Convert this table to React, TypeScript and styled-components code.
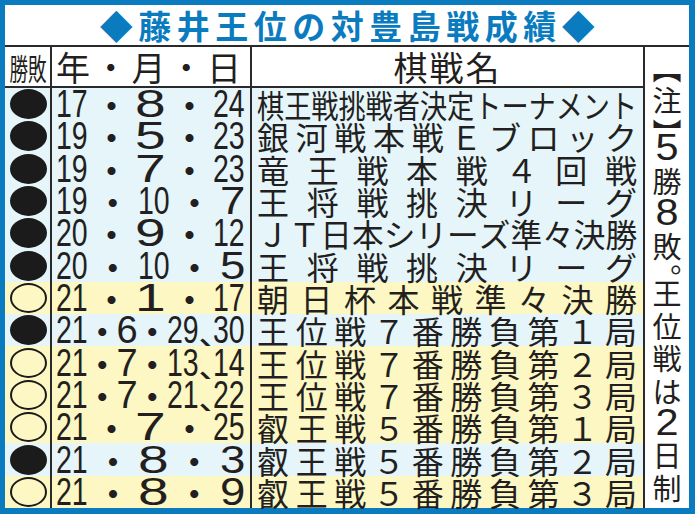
import React from 'react';
import styled, { createGlobalStyle } from 'styled-components';

const BLUE = '#0b7bc0';
const LINE = '#2a2a2a';
const INK = '#231f20';
const TONE = { win: '#fcf7c3', loss: '#e5f5fa' };

type Result = {
  win: boolean;
  y: string;
  m: string;
  d: string[];
  name: string;
};

const results: Result[] = [
  { win: false, y: '17', m: '8', d: ['24'], name: '棋王戦挑戦者決定トーナメント' },
  { win: false, y: '19', m: '5', d: ['23'], name: '銀河戦本戦Ｅブロック' },
  { win: false, y: '19', m: '7', d: ['23'], name: '竜王戦本戦４回戦' },
  { win: false, y: '19', m: '10', d: ['7'], name: '王将戦挑決リーグ' },
  { win: false, y: '20', m: '9', d: ['12'], name: 'ＪＴ日本シリーズ準々決勝' },
  { win: false, y: '20', m: '10', d: ['5'], name: '王将戦挑決リーグ' },
  { win: true, y: '21', m: '1', d: ['17'], name: '朝日杯本戦準々決勝' },
  { win: false, y: '21', m: '6', d: ['29', '30'], name: '王位戦７番勝負第１局' },
  { win: true, y: '21', m: '7', d: ['13', '14'], name: '王位戦７番勝負第２局' },
  { win: true, y: '21', m: '7', d: ['21', '22'], name: '王位戦７番勝負第３局' },
  { win: true, y: '21', m: '7', d: ['25'], name: '叡王戦５番勝負第１局' },
  { win: false, y: '21', m: '8', d: ['3'], name: '叡王戦５番勝負第２局' },
  { win: true, y: '21', m: '8', d: ['9'], name: '叡王戦５番勝負第３局' },
];

// vertical note, one glyph per slot; kind sets how much height the slot takes
type NoteKind = 'full' | 'open' | 'close' | 'stop' | 'digit';
const note: [string, NoteKind][] = [
  ['︻', 'open'],
  ['注', 'full'],
  ['︼', 'close'],
  ['5', 'digit'],
  ['勝', 'full'],
  ['8', 'digit'],
  ['敗', 'full'],
  ['︒', 'stop'],
  ['王', 'full'],
  ['位', 'full'],
  ['戦', 'full'],
  ['は', 'full'],
  ['2', 'digit'],
  ['日', 'full'],
  ['制', 'full'],
];

const NAME_SIZE = 32;
const NAME_SPACE = 380;

const GlobalStyle = createGlobalStyle`
  html, body {
    margin: 0;
    padding: 0;
    background: #fff;
  }
  body {
    font-family: 'Noto Sans CJK JP', 'Noto Sans', sans-serif;
    color: ${INK};
  }
`;

const Frame = styled.div`
  width: 695px;
  height: 514px;
  box-sizing: border-box;
  padding: 5px 6px 6px 5px;
  background: ${BLUE};
`;

const Sheet = styled.div`
  height: 100%;
  background: #fff;
  display: flex;
  flex-direction: column;
`;

const Title = styled.h1`
  margin: 0;
  height: 42px;
  flex: none;
  box-sizing: border-box;
  border-bottom: 2px solid ${LINE};
  display: flex;
  align-items: center;
  justify-content: center;
  padding-left: 6px;
  color: ${BLUE};
  font-family: 'Noto Sans CJK JP', sans-serif;
  font-size: 33px;
  font-weight: 700;
  letter-spacing: 5.5px;
  line-height: 1;
`;

const Body = styled.div`
  flex: 1;
  min-height: 0;
  display: flex;
`;

const Table = styled.div`
  flex: 1;
  display: grid;
  grid-template-columns: 47px 200px 1fr;
  grid-template-rows: 41px repeat(13, 1fr);
`;

const Cell = styled.div<{ $tone?: 'win' | 'loss'; $rule?: boolean; $head?: boolean }>`
  box-sizing: border-box;
  min-width: 0;
  min-height: 0;
  display: flex;
  align-items: center;
  background: ${(p) => (p.$tone ? TONE[p.$tone] : '#fff')};
  border-right: ${(p) => (p.$rule ? `2px solid ${LINE}` : 'none')};
  border-bottom: ${(p) => (p.$head ? `2px solid ${LINE}` : 'none')};
`;

const MarkCell = styled(Cell)`
  justify-content: center;
  padding-left: 1px;
`;

const Mark = styled.span<{ $win: boolean }>`
  width: 37px;
  height: 30px;
  box-sizing: border-box;
  border-radius: 50%;
  border: 2px solid #1b1b1b;
  background: ${(p) => (p.$win ? 'transparent' : '#1b1b1b')};
`;

const HeadMark = styled.span`
  flex: none;
  display: inline-block;
  white-space: nowrap;
  font-size: 30px;
  line-height: 1;
  transform: scaleX(0.62);
`;

const HeadDate = styled(Cell)`
  justify-content: space-between;
  padding: 0 9px 0 4px;
  font-size: 34px;
  line-height: 1;
`;

const HeadDot = styled.span`
  width: 22px;
  display: flex;
  justify-content: center;
`;

const HeadName = styled(Cell)`
  justify-content: center;
  font-size: 34px;
  letter-spacing: 2px;
  line-height: 1;
`;

const DateCell = styled(Cell)`
  justify-content: space-between;
  padding: 0 5px 0 4px;
  font-family: 'Liberation Sans', Arial, sans-serif;
  font-size: 38px;
  line-height: 1;
`;

const Num = styled.span<{ $n: number; $sx: number }>`
  flex: none;
  display: inline-block;
  white-space: nowrap;
  width: ${(p) => p.$n * 0.556 * p.$sx}em;
  transform: scaleX(${(p) => p.$sx});
  transform-origin: left center;
`;

const Dot = styled.span`
  flex: none;
  width: 14px;
  display: flex;
  justify-content: center;
  font-family: 'Noto Sans CJK JP', sans-serif;
`;

const DayGroup = styled.span`
  display: flex;
  align-items: center;
`;

const Comma = styled.span`
  flex: none;
  width: 15px;
  white-space: nowrap;
  font-family: 'Noto Sans CJK JP', sans-serif;
`;

const NameCell = styled(Cell)`
  padding: 0 6px 0 5px;
  font-size: ${NAME_SIZE}px;
  line-height: 1;
`;

const NameLine = styled.span<{ $sx: number }>`
  flex: none;
  display: flex;
  justify-content: space-between;
  width: ${(p) => NAME_SPACE / p.$sx}px;
  transform: scaleX(${(p) => p.$sx});
  transform-origin: left center;
`;

const Note = styled.aside`
  width: 46px;
  flex: none;
  box-sizing: border-box;
  border-left: 2px solid ${LINE};
  padding: 15px 0 6px;
  display: flex;
  flex-direction: column;
  align-items: center;
  justify-content: space-between;
`;

const slotHeight: Record<NoteKind, number> = {
  full: 29,
  digit: 29,
  open: 20,
  close: 12,
  stop: 12,
};

const NoteGlyph = styled.span<{ $kind: NoteKind }>`
  flex: none;
  display: flex;
  justify-content: center;
  align-items: ${(p) => (p.$kind === 'open' ? 'flex-end' : p.$kind === 'full' || p.$kind === 'digit' ? 'center' : 'flex-start')};
  width: 40px;
  height: ${(p) => slotHeight[p.$kind]}px;
  overflow: visible;
  font-family: ${(p) => (p.$kind === 'digit' ? "'Liberation Sans', Arial, sans-serif" : "'Noto Sans CJK JP', sans-serif")};
  font-size: ${(p) => (p.$kind === 'digit' ? 36 : 29)}px;
  line-height: ${(p) => (p.$kind === 'digit' ? 36 : 29)}px;
  & > span {
    display: block;
    flex: none;
    height: ${(p) => (p.$kind === 'digit' ? 36 : 29)}px;
    transform: ${(p) => (p.$kind === 'digit' ? 'scaleX(1.15)' : 'none')};
  }
`;

function Digits({ value, role }: { value: string; role: 'year' | 'month' | 'day' }) {
  let sx = 0.75;
  if (value.length === 1) sx = role === 'month' ? 1.45 : 1.2;
  return (
    <Num $n={value.length} $sx={sx}>
      {value}
    </Num>
  );
}

function DateText({ y, m, d }: Pick<Result, 'y' | 'm' | 'd'>) {
  const tight = d.length > 1;
  return (
    <>
      <Digits value={y} role="year" />
      <Dot>・</Dot>
      {tight ? (
        <Num $n={1} $sx={1}>
          {m}
        </Num>
      ) : (
        <Digits value={m} role="month" />
      )}
      <Dot>・</Dot>
      {tight ? (
        <DayGroup>
          <Num $n={2} $sx={0.75}>
            {d[0]}
          </Num>
          <Comma>、</Comma>
          <Num $n={2} $sx={0.75}>
            {d[1]}
          </Num>
        </DayGroup>
      ) : (
        <Digits value={d[0]} role="day" />
      )}
    </>
  );
}

function GameName({ name }: { name: string }) {
  const chars = Array.from(name);
  const sx = Math.min(1, NAME_SPACE / (chars.length * NAME_SIZE));
  return (
    <NameLine $sx={sx}>
      {chars.map((c, i) => (
        <span key={i}>{c}</span>
      ))}
    </NameLine>
  );
}

export default function App() {
  return (
    <>
      <GlobalStyle />
      <Frame>
        <Sheet>
          <Title>◆藤井王位の対豊島戦成績◆</Title>
          <Body>
            <Table>
              <MarkCell $rule $head>
                <HeadMark>勝敗</HeadMark>
              </MarkCell>
              <HeadDate $rule $head>
                <span>年</span>
                <HeadDot>・</HeadDot>
                <span>月</span>
                <HeadDot>・</HeadDot>
                <span>日</span>
              </HeadDate>
              <HeadName $head>棋戦名</HeadName>
              {results.map((r, i) => {
                const tone = r.win ? 'win' : 'loss';
                return (
                  <React.Fragment key={i}>
                    <MarkCell $tone={tone} $rule>
                      <Mark $win={r.win} />
                    </MarkCell>
                    <DateCell $tone={tone} $rule>
                      <DateText y={r.y} m={r.m} d={r.d} />
                    </DateCell>
                    <NameCell $tone={tone}>
                      <GameName name={r.name} />
                    </NameCell>
                  </React.Fragment>
                );
              })}
            </Table>
            <Note>
              {note.map(([c, kind], i) => (
                <NoteGlyph key={i} $kind={kind}>
                  <span>{c}</span>
                </NoteGlyph>
              ))}
            </Note>
          </Body>
        </Sheet>
      </Frame>
    </>
  );
}
